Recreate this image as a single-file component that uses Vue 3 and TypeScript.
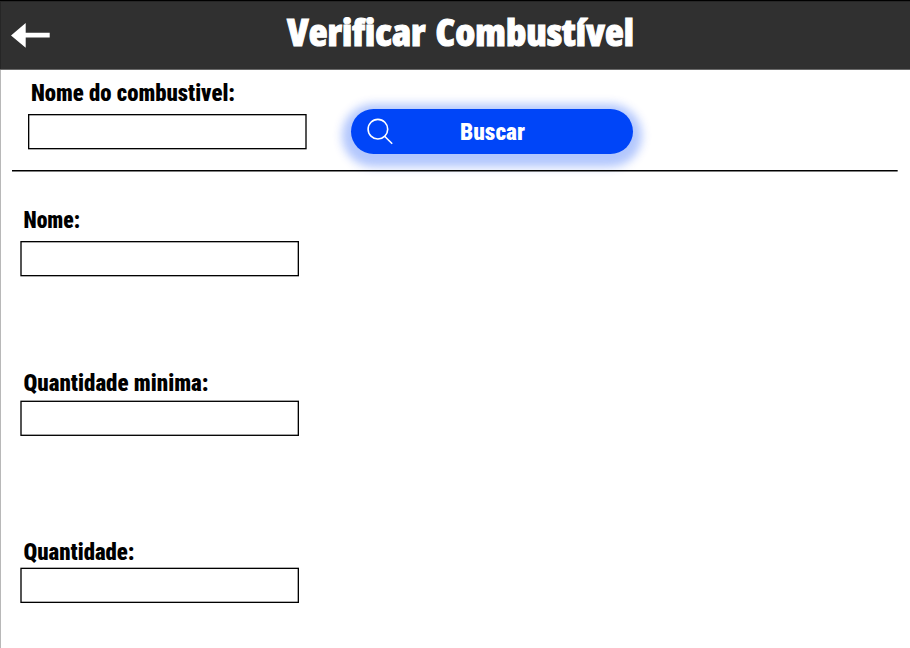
<script setup lang="ts">
interface Field {
  id: string
  label: string
  width: number
  x: number
  y: number
}

const search: Field = { id: 'busca', label: 'Nome do combustivel:', width: 204, x: 0.67, y: 0.67 }
const fields: Field[] = [
  { id: 'nome', label: 'Nome:', width: 56.5, x: 1, y: 1.67 },
  { id: 'minima', label: 'Quantidade minima:', width: 185, x: 1, y: 1.3 },
  { id: 'quantidade', label: 'Quantidade:', width: 111, x: 1, y: 1.35 },
]
</script>

<template>
  <main class="page">
    <header class="bar">
      <svg class="back" width="40" height="26" viewBox="0 0 40 26">
        <path d="M0 12.5 14.7 0V9.8H38.7V14.6H14.7V24.7Z" fill="#fff" />
      </svg>
      <svg class="title" width="360" height="56" role="heading">
        <text x="5" y="38" textLength="347" lengthAdjust="spacingAndGlyphs">Verificar Combustível</text>
      </svg>
    </header>

    <section class="search">
      <div class="field">
        <svg class="label" width="230" height="30">
          <text x="3" y="22" :textLength="search.width" lengthAdjust="spacingAndGlyphs">{{ search.label }}</text>
        </svg>
        <svg class="box" width="280" height="38">
          <rect :x="search.x" :y="search.y" width="277.33" height="34" />
        </svg>
      </div>
      <button class="buscar" type="button">
        <svg class="lens" width="28" height="28" viewBox="0 0 28 28">
          <circle cx="10.9" cy="11.2" r="9.8" />
          <path d="M17.6 18.3 25.2 25.8" />
        </svg>
        <svg class="caption" width="70" height="30">
          <text x="1" y="22" textLength="65" lengthAdjust="spacingAndGlyphs">Buscar</text>
        </svg>
      </button>
    </section>
    <svg class="rule" width="886" height="2"><rect width="885.67" height="1.5" /></svg>

    <section class="results">
      <div v-for="f in fields" :key="f.id" class="field" :class="f.id">
        <svg class="label" width="230" height="30">
          <text x="3.5" y="22" :textLength="f.width" lengthAdjust="spacingAndGlyphs">{{ f.label }}</text>
        </svg>
        <svg class="box" width="280" height="38">
          <rect :x="f.x" :y="f.y" width="277.33" height="34" />
        </svg>
      </div>
    </section>
  </main>
</template>

<style>
body {
  margin: 0;
  background: #fff;
  overflow: hidden;
}
</style>

<style scoped>
.page {
  box-sizing: border-box;
  width: 910px;
  height: 648px;
  border-left: 1px solid #b8b8b8;
  font-family: "Open Sans", "Noto Sans", sans-serif;
}
svg {
  display: block;
  flex: none;
}
.bar {
  box-sizing: border-box;
  display: flex;
  align-items: flex-start;
  height: 70px;
  margin-left: -1px;
  padding-left: 11px;
  border-top: 1px solid #000;
  border-bottom: 1px solid #696969;
  background: #303030;
  box-shadow: inset 1px 1px #262626;
}
.back {
  margin-top: 22px;
}
.title {
  margin: 7px 0 0 231px;
  overflow: visible;
  fill: #fff;
  stroke: #fff;
  stroke-width: 1px;
  font-size: 37px;
  font-weight: 800;
  font-stretch: 75%;
  word-spacing: 3px;
}
.search {
  display: flex;
  height: 100px;
  padding-left: 27px;
}
.search .field {
  padding-top: 9px;
}
.label {
  fill: #000;
  font-family: Roboto, sans-serif;
  font-size: 23.5px;
  font-weight: 900;
  font-stretch: 75%;
}
.search .box {
  margin-top: 5px;
}
.box rect {
  fill: #fff;
  stroke: #000;
  stroke-width: 1.33px;
}
.buscar {
  display: flex;
  align-items: flex-start;
  width: 282px;
  height: 44.5px;
  margin: 39.3px 0 0 43px;
  padding: 0 0 0 16px;
  border: 0;
  border-radius: 23px;
  background: #0045f8;
  box-shadow: 0 4px 10px 9px rgba(0, 69, 248, 0.3);
}
.lens {
  margin-top: 9px;
  fill: none;
  stroke: #fff;
  stroke-width: 1.6px;
}
.caption {
  margin: 9px 0 0 64px;
  fill: #fff;
  font-family: Roboto, sans-serif;
  font-size: 23.5px;
  font-weight: 900;
  font-stretch: 75%;
}
.rule {
  position: relative;
  margin-left: 11px;
}
.results {
  padding-left: 19px;
}
.nome {
  padding-top: 34px;
}
.nome .box {
  margin-top: 4px;
}
.minima {
  padding-top: 91px;
}
.minima .box {
  margin-top: 1px;
}
.quantidade {
  padding-top: 100px;
}
.quantidade .box {
  margin-top: -1px;
}
</style>
